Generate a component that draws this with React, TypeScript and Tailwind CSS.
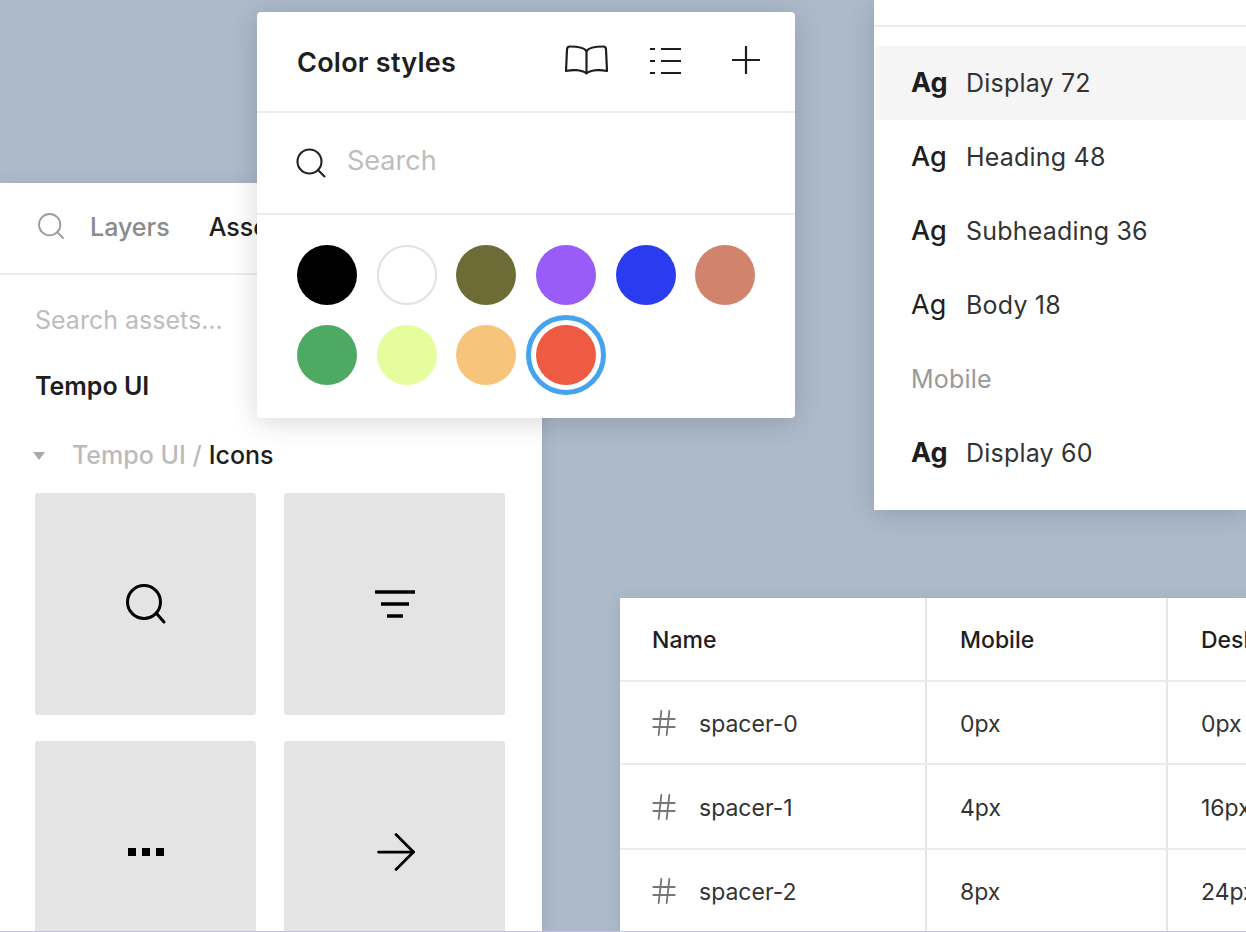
import React from 'react';
import { ArrowRight, Hash, Search } from 'lucide-react';

const swatches = ['#000000', '#ffffff', '#6d6b36', '#995cf6', '#2b3bf0', '#d0846c', '#4ea962', '#e6fd9d', '#f6c47b', '#ee5a42'];

const typeRows = [
  { label: 'Display 72', bold: true, active: true },
  { label: 'Heading 48', medium: true },
  { label: 'Subheading 36', medium: true },
  { label: 'Body 18' },
];

const spacers = [
  { name: 'spacer-0', mobile: '0px', desktop: '0px', h: 'h-[83px]' },
  { name: 'spacer-1', mobile: '4px', desktop: '16px', h: 'h-[85px]' },
  { name: 'spacer-2', mobile: '8px', desktop: '24px', h: 'h-[82px]' },
];

const AgRow = ({ label, bold, medium, active }: { label: string; bold?: boolean; medium?: boolean; active?: boolean }) => (
  <div className={`flex h-[74px] items-center pl-[35px] ${active ? 'bg-[#f5f5f5]' : ''}`}>
    <span className={`w-[55px] text-[27px] text-[#1e1e1e] ${bold ? 'font-bold' : medium ? 'font-medium' : 'font-normal'}`}>Ag</span>
    <span className="mt-[1px] text-[25px] tracking-[0.2px] text-[#333333]">{label}</span>
  </div>
);

const IconTile = ({ children }: { children: React.ReactNode }) => (
  <div className="flex h-[222px] w-[221px] shrink-0 items-center justify-center rounded-[3px] bg-[#e4e4e4]">{children}</div>
);

export default function App() {
  return (
    <div className="relative h-[932px] w-[1246px] overflow-hidden bg-[#adbaca] font-['Inter',sans-serif]">
      {/* assets panel */}
      <div className="absolute left-0 top-[183px] h-[749px] w-[542px] bg-white shadow-[0_2px_14px_rgba(60,70,100,0.18)]">
        <div className="flex h-[92px] items-center border-b-2 border-[#ececec] pl-[35px]">
          <Search size={32} strokeWidth={1.4} className="mb-[4px] text-[#9c9c9c]" />
          <span className="ml-[23px] text-[25px] font-medium text-[#8a8a8a]">Layers</span>
          <span className="ml-[39px] text-[25px] font-medium text-[#1e1e1e]">Assets</span>
        </div>
        <div className="pl-[35px]">
          <div className="mt-[28px] text-[25px] leading-[34px] text-[#bdbdbd]">Search assets...</div>
          <div className="mt-[32px] text-[25px] font-semibold leading-[34px] text-[#1e1e1e]">Tempo UI</div>
          <div className="mt-[36px] flex h-[34px] items-center">
            <span className="-ml-[2px] h-0 w-0 border-x-[6px] border-t-[8px] border-x-transparent border-t-[#a8a8a8]" />
            <span className="ml-[27px] text-[25px] font-medium text-[#bbbbbb]">Tempo UI /</span>
            <span className="ml-[7px] text-[25px] font-medium text-[#1e1e1e]">Icons</span>
          </div>
          <div className="mt-[20px] flex flex-col gap-[26px]">
            <div className="flex gap-[28px]">
              <IconTile>
                <svg width="42" height="42" viewBox="0 0 42 42" fill="none" stroke="#000" strokeWidth="3" strokeLinecap="round">
                  <circle cx="19" cy="19" r="16.5" />
                  <path d="M32 31l7 8" />
                </svg>
              </IconTile>
              <IconTile>
                <svg width="40" height="30" viewBox="0 0 40 30" fill="none" stroke="#000" strokeWidth="3.5">
                  <path d="M0 3h40M6 15h28M12 27h16" />
                </svg>
              </IconTile>
            </div>
            <div className="flex gap-[28px]">
              <IconTile>
                <svg width="36" height="10" viewBox="0 0 36 10" fill="#000">
                  <path d="M0 1h8v8H0zM14 1h8v8h-8zM28 1h8v8h-8z" />
                </svg>
              </IconTile>
              <IconTile>
                <ArrowRight size={60} strokeWidth={1.1} className="ml-[3px] text-black" />
              </IconTile>
            </div>
          </div>
        </div>
      </div>

      {/* color styles popover */}
      <div className="absolute left-[257px] top-[12px] h-[406px] w-[538px] rounded-[4px] bg-white shadow-[0_4px_28px_rgba(0,0,0,0.16)]">
        <div className="flex h-[101px] items-center border-b-2 border-[#ececec] pl-[40px]">
          <span className="mt-[3px] w-[159px] text-[27px] font-semibold tracking-[0.25px] whitespace-nowrap text-[#1e1e1e]">Color styles</span>
          <svg width="43" height="30" viewBox="0 0 43 30" fill="none" stroke="#1e1e1e" strokeWidth="2.2" strokeLinejoin="round" className="ml-[109px] mb-[3px]">
            <path d="M21.5 6C19 2.5 14 1.5 5 1.5 3 1.5 2 2.5 2 4.5L1 26c4-.8 7-1 10-.8 4.500.3 8 1 10.500 3.300 2.500-2.300 6-3 10.500-3.300 3-.2 6 0 10 .8L41 4.500c0-2-1-3-3-3-9 0-14 1-16.500 4.500z" />
            <path d="M21.500 6v22" />
          </svg>
          <svg width="31" height="28" viewBox="0 0 31 28" fill="none" stroke="#1e1e1e" strokeWidth="2" className="ml-[42px] mb-[1px]">
            <path d="M0 2h5M11 2h20M0 14h5M11 14h20M0 26h5M11 26h20" />
          </svg>
          <svg width="28" height="28" viewBox="0 0 28 28" fill="none" stroke="#1e1e1e" strokeWidth="2.200" className="ml-[51px] mb-[3px]">
            <path d="M14 0v28M0 14h28" />
          </svg>
        </div>
        <div className="flex h-[102px] items-center border-b-2 border-[#ececec] pl-[36px]">
          <Search size={36} strokeWidth={1.400} className="text-[#222222]" />
          <span className="mb-[3px] ml-[18px] text-[27px] text-[#bdbdbd]">Search</span>
        </div>
        <div className="grid grid-cols-[repeat(6,60px)] gap-x-[19.7px] gap-y-[20px] pl-[40px] pt-[30px]">
          {swatches.map((color, i) => (
            <div key={color} className="relative h-[60px] w-[60px]">
              <div
                className={`h-[60px] w-[60px] rounded-full ${i === 1 ? 'border-2 border-[#e2e2e6]' : ''}`}
                style={{ backgroundColor: color }}
              />
              {i === 9 && <div className="absolute -inset-[10px] rounded-full border-[5px] border-[#46a3ee]" />}
            </div>
          ))}
        </div>
      </div>

      {/* type styles panel */}
      <div className="absolute left-[874px] top-0 h-[510px] w-[372px] bg-white shadow-[0_4px_24px_rgba(40,50,80,0.2)]">
        <div className="h-[27px] border-b-2 border-[#ececec]" />
        <div className="ml-[2px] mt-[19px]">
          {typeRows.map((row) => (
            <AgRow key={row.label} {...row} />
          ))}
          <div className="flex h-[74px] items-center pl-[35px] pt-[1px] text-[25px] tracking-[0.2px] text-[#999999]">Mobile</div>
          <AgRow label="Display 60" bold />
        </div>
      </div>

      {/* spacing table */}
      <div className="absolute left-[620px] top-[598px] h-[334px] w-[626px] bg-white text-[23px] text-[#333333] shadow-[0_2px_12px_rgba(60,70,100,0.16)]">
        <div className="flex h-[84px] items-center border-b-2 border-[#ececec] font-medium text-[#1e1e1e]">
          <div className="flex h-full w-[307px] items-center border-r-2 border-[#e6e6e6] pl-[32px] pt-[2px]">Name</div>
          <div className="flex h-full w-[241px] items-center border-r-2 border-[#e6e6e6] pl-[33px] pt-[2px]">Mobile</div>
          <div className="flex h-full flex-1 items-center overflow-hidden pl-[33px] pt-[2px]">Desktop</div>
        </div>
        {spacers.map((row) => (
          <div key={row.name} className={`flex items-center border-b-2 border-[#ececec] last:border-b-0 ${row.h}`}>
            <div className="flex h-full w-[307px] items-center border-r-2 border-[#e6e6e6] pl-[28px]">
              <Hash size={32} strokeWidth={1.400} className="text-[#777777]" />
              <span className="ml-[19px] pt-[3px]">{row.name}</span>
            </div>
            <div className="flex h-full w-[241px] items-center border-r-2 border-[#e6e6e6] pl-[33px] pt-[3px]">{row.mobile}</div>
            <div className="flex h-full flex-1 items-center overflow-hidden pl-[33px] pt-[3px]">{row.desktop}</div>
          </div>
        ))}
      </div>

      {/* stray line along the bottom edge of the capture */}
      <div className="absolute inset-x-0 bottom-0 h-px bg-[#c5bdf0]" />
    </div>
  );
}
